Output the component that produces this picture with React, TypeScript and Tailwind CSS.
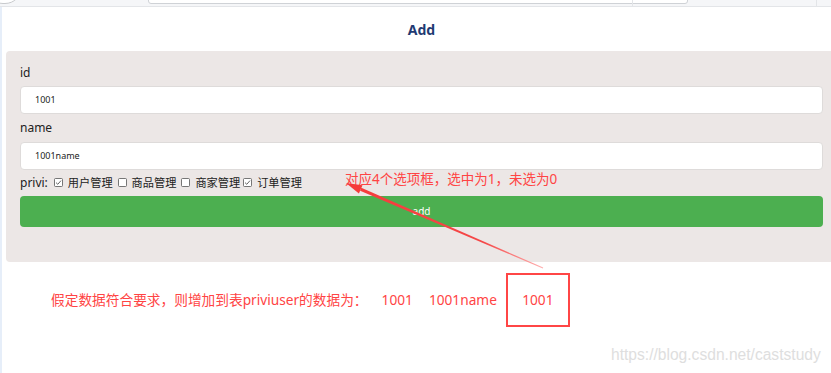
import React from "react";

const font = { fontFamily: '"Noto Sans", "Noto Sans CJK SC", sans-serif' };

function Box({ checked }: { checked?: boolean }) {
  return (
    <svg width="9" height="9" viewBox="0 0 9 9" className="shrink-0">
      <rect x="0.5" y="0.5" width="8" height="8" rx="1" fill="#fff" stroke="#555" strokeWidth="0.8" />
      {checked && <path d="M2 4.6 L3.8 6.3 L7 2.6" fill="none" stroke="#555" strokeWidth="0.9" />}
    </svg>
  );
}

export default function App() {
  const privs = [
    { label: "用户管理", checked: true },
    { label: "商品管理", checked: false },
    { label: "商家管理", checked: false },
    { label: "订单管理", checked: true },
  ];

  return (
    <div className="relative w-[831px] h-[373px] overflow-hidden bg-white" style={font}>
      {/* browser strip */}
      <div className="relative h-[7px] bg-[#f5f6f8] border-b border-[#e3e5e8]">
        <div className="absolute left-[-14px] top-[-30px] w-[36px] h-[34px] rounded-full border border-[#c8cacd] bg-white"></div>
        <div className="absolute left-[148px] top-[-10px] w-[540px] h-[14px] rounded-[3px] border border-[#cfd2d6] bg-white"></div>
        <div className="absolute left-[632px] top-0 w-px h-[6px] bg-[#e3e5e8]"></div>
        <div className="absolute left-[816px] top-0 w-px h-[6px] bg-[#e3e5e8]"></div>
      </div>

      <div className="flex h-[373px]">
        <div className="w-[2px] bg-[#e6eef9] shrink-0"></div>
        <div className="flex-1 flex flex-col">
          <h1 className="h-[44px] pl-[10px] flex items-center justify-center text-[14px] font-bold text-[#1f3a72]">Add</h1>

          <div className="ml-[4px] rounded-l-[4px] bg-[#ece7e6] pl-[14px] pr-[8px] pt-[12px] pb-[35px] text-[#222]">
            <div className="h-[20px] leading-[20px] text-[12px]">id</div>
            <div className="mt-[3px] h-[28px] rounded-[4px] border border-[#dedbda] bg-white pl-[14px] flex items-center text-[9px] text-[#222]">1001</div>
            <div className="mt-[4px] h-[20px] leading-[20px] text-[12px]">name</div>
            <div className="mt-[4px] h-[28px] rounded-[4px] border border-[#dedbda] bg-white pl-[14px] flex items-center text-[9px] text-[#222]">1001name</div>
            <div className="mt-[4px] h-[18px] flex items-center text-[12px]">
              <span className="mr-[6px]">privi:</span>
              {privs.map((p, i) => (
                <span key={p.label} className={`flex items-center ${i === 2 ? "mr-[3px]" : "mr-[5px]"}`}>
                  <Box checked={p.checked} />
                  <span className="ml-[5px] text-[11.2px]">{p.label}</span>
                </span>
              ))}
            </div>
            <div className="mt-[4px] h-[31px] rounded-[4px] bg-[#4caf50] flex items-center justify-center text-[10px] text-white">add</div>
          </div>

          <div className="mt-[11px] pl-[49px] flex items-center text-[13.7px] text-[#ff4444]">
            <span>假定数据符合要求，则增加到表priviuser的数据为：</span>
            <span className="ml-[14px]">1001</span>
            <span className="ml-[16px]">1001name</span>
            <div className="ml-[9px] w-[64px] h-[54px] border-2 border-[#ff4646] flex items-center justify-center">1001</div>
          </div>
        </div>
      </div>

      {/* annotation */}
      <div className="absolute left-[345px] top-[169px] text-[13.5px] leading-[20px] text-[#ff4444]">对应4个选项框，选中为1，未选为0</div>

      <svg className="absolute inset-0 pointer-events-none" width="831" height="373">
        <defs>
          <linearGradient id="ln" x1="346" y1="183" x2="543" y2="268" gradientUnits="userSpaceOnUse">
            <stop offset="0" stopColor="#f53b3b" />
            <stop offset="0.7" stopColor="#f54848" />
            <stop offset="1" stopColor="#ffb0b0" />
          </linearGradient>
        </defs>
        <polygon points="346,183 358.9,193.4 362.5,185.2" fill="#f53b3b" />
        <polygon points="360.1,190.8 361.3,187.8 543.2,267.6 542.8,268.4" fill="url(#ln)" />
      </svg>

      <div
        className="absolute left-[611px] top-[343px] text-[15.6px] text-[#dedede]"
        style={{ fontFamily: '"Liberation Sans", Arial, sans-serif' }}
      >
        https://blog.csdn.net/caststudy
      </div>
    </div>
  );
}
